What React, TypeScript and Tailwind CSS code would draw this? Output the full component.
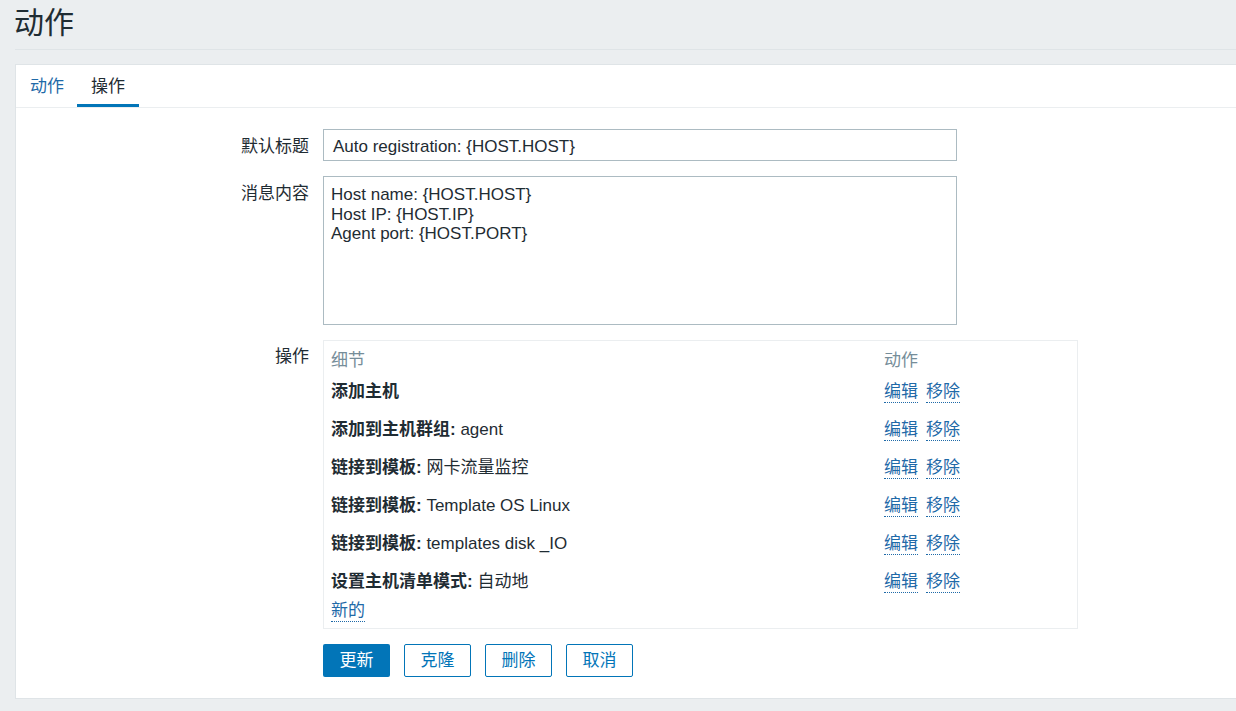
const FONT = '"Liberation Sans", "Noto Sans CJK SC", sans-serif';

const OPERATIONS: { label: string; value?: string }[] = [
  { label: '添加主机' },
  { label: '添加到主机群组', value: 'agent' },
  { label: '链接到模板', value: '网卡流量监控' },
  { label: '链接到模板', value: 'Template OS Linux' },
  { label: '链接到模板', value: 'templates disk _IO' },
  { label: '设置主机清单模式', value: '自动地' },
];

function ActionLink({ children }: { children: React.ReactNode }) {
  return (
    <span className="text-[#1f6aa8] border-b border-dotted border-[#1f6aa8] leading-[20px] cursor-pointer">
      {children}
    </span>
  );
}

export default function App() {
  return (
    <div
      className="w-[1236px] h-[711px] overflow-hidden bg-[#ebeef0] text-[#1f2c33] text-[17px]"
      style={{ fontFamily: FONT }}
    >
      {/* 页头 */}
      <div className="pl-[14px] pt-[4px] h-[49px]">
        <h1 className="text-[30px] leading-[38px] font-normal">动作</h1>
      </div>
      <div className="ml-[15px] border-t border-[#dfe4e7] h-[15px]" />

      {/* 面板 */}
      <div className="ml-[15px] w-[1240px] h-[635px] bg-white border border-[#dfe4e7]">
        {/* 标签 */}
        <div className="flex h-[43px] border-b border-[#ebeef0]">
          <div className="pl-[14px] pr-[13px] flex items-center text-[#1f6aa8] pt-[2px]">动作</div>
          <div className="px-[14px] flex items-center border-b-[3px] border-[#0275b8] pt-[4px]">
            操作
          </div>
        </div>

        {/* 表单 */}
        <div className="pt-[21px] flex flex-col gap-[15px]">
          <div className="flex items-center">
            <div className="w-[293px] text-right pt-[3px]">默认标题</div>
            <div className="ml-[14px] w-[634px] h-[32px] border border-[#acbbc2] flex items-center px-[9px] pt-[3px]">
              Auto registration: {'{HOST.HOST}'}
            </div>
          </div>

          <div className="flex items-start">
            <div className="w-[293px] text-right pt-[8px] leading-[20px]">消息内容</div>
            <div className="ml-[14px] w-[634px] h-[149px] border border-[#acbbc2] px-[7px] pt-[8px] leading-[19.5px]">
              <div>Host name: {'{HOST.HOST}'}</div>
              <div>Host IP: {'{HOST.IP}'}</div>
              <div>Agent port: {'{HOST.PORT}'}</div>
            </div>
          </div>

          <div className="flex items-start">
            <div className="w-[293px] text-right pt-[7px] leading-[20px]">操作</div>
            <div className="ml-[14px] w-[755px] h-[289px] border border-[#ebeef0] pl-[7px] pt-[10px]">
              <div className="flex leading-[20px] text-[#768d99]">
                <div className="w-[553px]">细节</div>
                <div>动作</div>
              </div>
              <div className="mt-[2px]">
                {OPERATIONS.map((op, i) => (
                  <div key={i} className="flex items-center h-[38px]">
                    <div className="w-[553px]">
                      <span className="font-bold">
                        {op.label}
                        {op.value ? ':' : ''}
                      </span>
                      {op.value ? ` ${op.value}` : ''}
                    </div>
                    <div className="flex gap-[8px]">
                      <ActionLink>编辑</ActionLink>
                      <ActionLink>移除</ActionLink>
                    </div>
                  </div>
                ))}
              </div>
              <div className="h-[20px] flex items-center">
                <ActionLink>新的</ActionLink>
              </div>
            </div>
          </div>

          <div className="flex pl-[307px] gap-[14px]">
            <button className="w-[67px] h-[33px] rounded-[2px] bg-[#0275b8] text-white">更新</button>
            <button className="w-[67px] h-[33px] rounded-[2px] border border-[#0275b8] text-[#0275b8] bg-white">
              克隆
            </button>
            <button className="w-[67px] h-[33px] rounded-[2px] border border-[#0275b8] text-[#0275b8] bg-white">
              删除
            </button>
            <button className="w-[67px] h-[33px] rounded-[2px] border border-[#0275b8] text-[#0275b8] bg-white">
              取消
            </button>
          </div>
        </div>
      </div>
    </div>
  );
}
